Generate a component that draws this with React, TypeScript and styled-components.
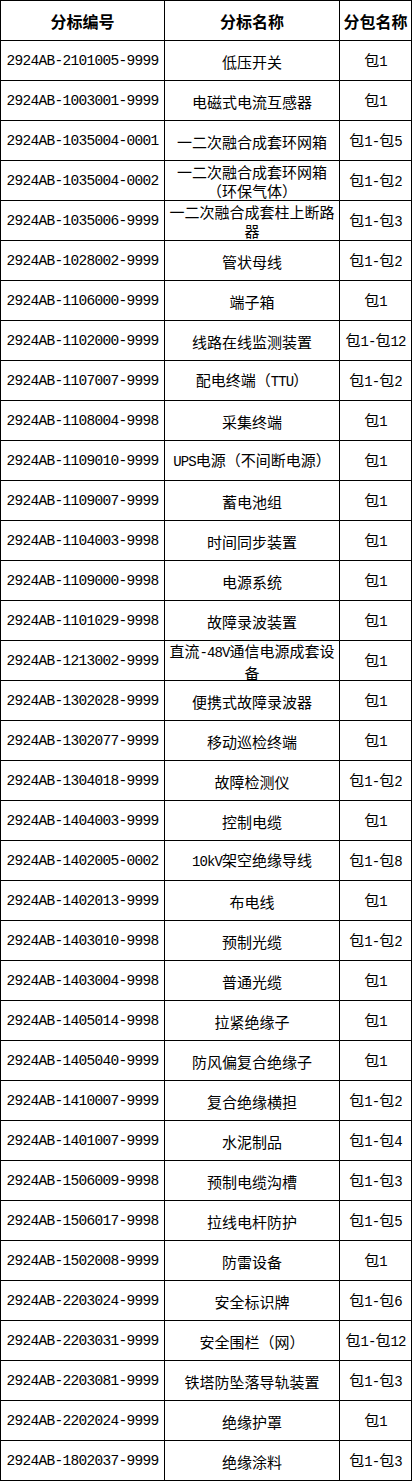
import React from "react";
import styled, { createGlobalStyle } from "styled-components";

const GlobalStyle = createGlobalStyle`
  html, body {
    margin: 0;
    padding: 0;
    background: #ffffff;
  }
  body {
    font-family: "Noto Sans CJK SC", "Noto Sans", sans-serif;
    color: #000000;
  }
`;

const Table = styled.div`
  display: grid;
  grid-template-columns: 163px 174px 71px;
  grid-auto-rows: 39px;
  gap: 1px;
  padding: 1px;
  width: 412px;
  box-sizing: border-box;
  background: #000000;
`;

const HeaderCell = styled.div`
  background: #ffffff;
  display: flex;
  align-items: center;
  justify-content: center;
  font-family: "Noto Sans CJK SC", sans-serif;
  font-weight: 700;
  font-size: 16px;
  line-height: 19px;
  white-space: nowrap;
  padding-top: 1px;
`;

const Cell = styled.div`
  background: #ffffff;
  display: flex;
  flex-direction: column;
  align-items: center;
  justify-content: center;
  text-align: center;
  font-family: "Noto Sans CJK SC", sans-serif;
  font-size: 15px;
  line-height: 19px;
  padding: 1px 3px 0;
  box-sizing: border-box;
  white-space: nowrap;
`;

const CodeCell = styled(Cell)`
  font-family: "Liberation Mono", "DejaVu Sans Mono", monospace;
  font-size: 14.5px;
  letter-spacing: -0.7px;
`;

const Line = styled.span`
  display: block;
`;

const Latin = styled.span`
  font-family: "Liberation Mono", "DejaVu Sans Mono", monospace;
  font-size: 14px;
  letter-spacing: -0.9px;
`;

type Row = { code: string; name: string[]; pkg: string };

const rows: Row[] = [
  { code: "2924AB-2101005-9999", name: ["低压开关"], pkg: "包1" },
  { code: "2924AB-1003001-9999", name: ["电磁式电流互感器"], pkg: "包1" },
  { code: "2924AB-1035004-0001", name: ["一二次融合成套环网箱"], pkg: "包1-包5" },
  { code: "2924AB-1035004-0002", name: ["一二次融合成套环网箱", "（环保气体）"], pkg: "包1-包2" },
  { code: "2924AB-1035006-9999", name: ["一二次融合成套柱上断路", "器"], pkg: "包1-包3" },
  { code: "2924AB-1028002-9999", name: ["管状母线"], pkg: "包1-包2" },
  { code: "2924AB-1106000-9999", name: ["端子箱"], pkg: "包1" },
  { code: "2924AB-1102000-9999", name: ["线路在线监测装置"], pkg: "包1-包12" },
  { code: "2924AB-1107007-9999", name: ["配电终端（TTU）"], pkg: "包1-包2" },
  { code: "2924AB-1108004-9998", name: ["采集终端"], pkg: "包1" },
  { code: "2924AB-1109010-9999", name: ["UPS电源（不间断电源）"], pkg: "包1" },
  { code: "2924AB-1109007-9999", name: ["蓄电池组"], pkg: "包1" },
  { code: "2924AB-1104003-9998", name: ["时间同步装置"], pkg: "包1" },
  { code: "2924AB-1109000-9998", name: ["电源系统"], pkg: "包1" },
  { code: "2924AB-1101029-9998", name: ["故障录波装置"], pkg: "包1" },
  { code: "2924AB-1213002-9999", name: ["直流-48V通信电源成套设", "备"], pkg: "包1" },
  { code: "2924AB-1302028-9999", name: ["便携式故障录波器"], pkg: "包1" },
  { code: "2924AB-1302077-9999", name: ["移动巡检终端"], pkg: "包1" },
  { code: "2924AB-1304018-9999", name: ["故障检测仪"], pkg: "包1-包2" },
  { code: "2924AB-1404003-9999", name: ["控制电缆"], pkg: "包1" },
  { code: "2924AB-1402005-0002", name: ["10kV架空绝缘导线"], pkg: "包1-包8" },
  { code: "2924AB-1402013-9999", name: ["布电线"], pkg: "包1" },
  { code: "2924AB-1403010-9998", name: ["预制光缆"], pkg: "包1-包2" },
  { code: "2924AB-1403004-9998", name: ["普通光缆"], pkg: "包1" },
  { code: "2924AB-1405014-9998", name: ["拉紧绝缘子"], pkg: "包1" },
  { code: "2924AB-1405040-9999", name: ["防风偏复合绝缘子"], pkg: "包1" },
  { code: "2924AB-1410007-9999", name: ["复合绝缘横担"], pkg: "包1-包2" },
  { code: "2924AB-1401007-9999", name: ["水泥制品"], pkg: "包1-包4" },
  { code: "2924AB-1506009-9998", name: ["预制电缆沟槽"], pkg: "包1-包3" },
  { code: "2924AB-1506017-9998", name: ["拉线电杆防护"], pkg: "包1-包5" },
  { code: "2924AB-1502008-9999", name: ["防雷设备"], pkg: "包1" },
  { code: "2924AB-2203024-9999", name: ["安全标识牌"], pkg: "包1-包6" },
  { code: "2924AB-2203031-9999", name: ["安全围栏（网）"], pkg: "包1-包12" },
  { code: "2924AB-2203081-9999", name: ["铁塔防坠落导轨装置"], pkg: "包1-包3" },
  { code: "2924AB-2202024-9999", name: ["绝缘护罩"], pkg: "包1" },
  { code: "2924AB-1802037-9999", name: ["绝缘涂料"], pkg: "包1-包3" },
];

function Mixed({ text }: { text: string }) {
  const parts = text.split(/([\x00-\x7F]+)/);
  return (
    <Line>
      {parts.map((p, i) =>
        p === "" ? null : i % 2 === 1 ? <Latin key={i}>{p}</Latin> : <React.Fragment key={i}>{p}</React.Fragment>
      )}
    </Line>
  );
}

export default function App() {
  return (
    <>
      <GlobalStyle />
      <Table role="table">
        <HeaderCell role="columnheader">分标编号</HeaderCell>
        <HeaderCell role="columnheader">分标名称</HeaderCell>
        <HeaderCell role="columnheader">分包名称</HeaderCell>
        {rows.map((r) => (
          <React.Fragment key={r.code}>
            <CodeCell role="cell">{r.code}</CodeCell>
            <Cell role="cell">
              {r.name.map((l, i) => (
                <Mixed key={i} text={l} />
              ))}
            </Cell>
            <Cell role="cell">
              <Mixed text={r.pkg} />
            </Cell>
          </React.Fragment>
        ))}
      </Table>
    </>
  );
}
